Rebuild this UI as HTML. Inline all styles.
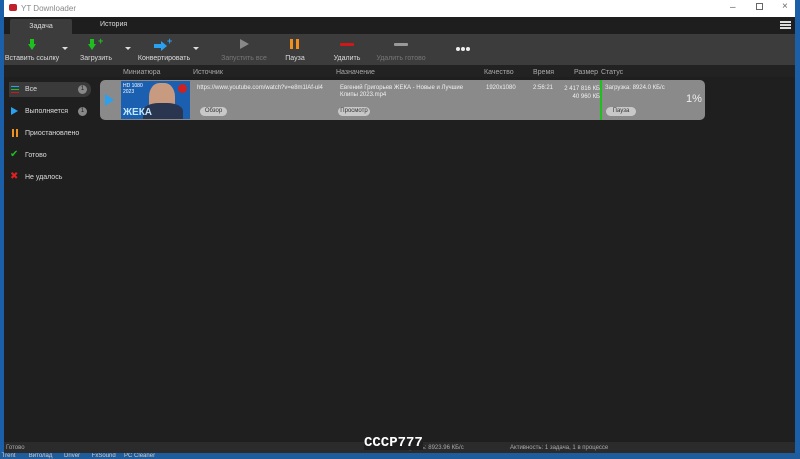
<!DOCTYPE html>
<html><head><meta charset="utf-8"><style>
*{box-sizing:border-box;margin:0;padding:0}
body{width:800px;height:459px;overflow:hidden;background:#1a5fa8;font-family:"Liberation Sans",sans-serif;font-size:7px;color:#ddd;position:relative}
.abs{position:absolute}
.win{left:4px;top:0;width:791px;height:453px;background:#1f1f1f}
.title{left:0;top:0;width:791px;height:17px;background:#fff;color:#888;font-size:8px}
.tabs{left:0;top:17px;width:791px;height:17px;background:#1e1e1e}
.tb{top:34px;left:0;width:791px;height:31px;background:#3c3c3c}
.tbi{position:absolute;top:0;height:31px;text-align:center;color:#ddd;font-size:7px}
.tbi span{position:absolute;bottom:3px;left:0;right:0;white-space:nowrap}
.hdr{top:65px;left:0;width:791px;height:12px;background:#222;color:#aaa}
.hdr div{position:absolute;top:4px}
.si{position:absolute;left:5px;height:15px;width:82px;line-height:15px;padding-left:16px}
.badge{position:absolute;right:4px;top:3px;width:9px;height:9px;border-radius:50%;background:#888;color:#222;font-size:6px;line-height:9px;text-align:center}
.card{left:96px;top:80px;width:605px;height:40px;background:#8a8a8a;border-radius:5px;color:#f0f0f0}
.btn{position:absolute;background:#c8c8c8;color:#333;border-radius:5px;height:9px;font-size:6px;line-height:9px;text-align:center}
.status{left:0;top:442px;width:791px;height:11px;background:#2b2b2b;color:#aaa;font-size:6px}
</style></head><body>
<div class="abs" style="left:0;top:453px;width:800px;height:6px;background:#1f5c9c;color:#ccc;font-size:6px;line-height:6px">&nbsp;Trent &nbsp;&nbsp;&nbsp;&nbsp;&nbsp;&nbsp; Витолад &nbsp;&nbsp;&nbsp;&nbsp;&nbsp; Driver &nbsp;&nbsp;&nbsp;&nbsp;&nbsp; FxSound &nbsp;&nbsp;&nbsp; PC Cleaner</div>
<div class="abs win">
 <div class="abs title"><div class="abs" style="left:5px;top:4px;width:8px;height:7px;background:#c0202a;border-radius:2px"></div><div class="abs" style="left:17px;top:4px">YT Downloader</div>
 <div class="abs" style="left:726px;top:2px;font-size:10px;color:#666">–</div><div class="abs" style="left:752px;top:3px;width:7px;height:7px;border:1px solid #666"></div><div class="abs" style="left:778px;top:1px;font-size:10px;color:#666">×</div></div>
 <div class="abs tabs"><div class="abs" style="left:6px;top:2px;width:62px;height:15px;background:#3c3c3c;text-align:center;line-height:15px;border-radius:2px 2px 0 0">Задача</div><div class="abs" style="left:96px;top:4px">История</div>
 <div class="abs" style="left:776px;top:4px;width:11px;height:2px;background:#ddd;box-shadow:0 3px #ddd,0 6px #ddd"></div></div>
 <div class="abs tb">
  <div class="tbi" style="left:0;width:56px"><div class="abs" style="left:26px;top:5px;width:4px;height:5px;background:#1ec01e"></div><div class="abs" style="left:24px;top:10px;border-left:4px solid transparent;border-right:4px solid transparent;border-top:6px solid #1ec01e"></div><span>Вставить ссылку</span></div>
  <div class="abs" style="left:58px;top:13px;border:3px solid transparent;border-top:3px solid #ddd"></div>
  <div class="tbi" style="left:72px;width:40px"><div class="abs" style="left:14px;top:5px;width:4px;height:5px;background:#1ec01e"></div><div class="abs" style="left:12px;top:10px;border-left:4px solid transparent;border-right:4px solid transparent;border-top:6px solid #1ec01e"></div><div class="abs" style="left:22px;top:2px;color:#1ec01e;font-size:9px;font-weight:bold">+</div><span>Загрузить</span></div>
  <div class="abs" style="left:121px;top:13px;border:3px solid transparent;border-top:3px solid #ddd"></div>
  <div class="tbi" style="left:130px;width:60px"><div class="abs" style="left:20px;top:10px;width:7px;height:4px;background:#2aa0f0"></div><div class="abs" style="left:27px;top:7px;border-top:5px solid transparent;border-bottom:5px solid transparent;border-left:6px solid #2aa0f0"></div><div class="abs" style="left:33px;top:2px;color:#2aa0f0;font-size:9px;font-weight:bold">+</div><span>Конвертировать</span></div>
  <div class="abs" style="left:189px;top:13px;border:3px solid transparent;border-top:3px solid #ddd"></div>
  <div class="tbi" style="left:215px;width:50px;color:#777"><div class="abs" style="left:21px;top:5px;border-top:5px solid transparent;border-bottom:5px solid transparent;border-left:9px solid #888"></div><span>Запустить все</span></div>
  <div class="tbi" style="left:276px;width:30px"><div class="abs" style="left:10px;top:5px;width:3px;height:10px;background:#f0901e"></div><div class="abs" style="left:16px;top:5px;width:3px;height:10px;background:#f0901e"></div><span>Пауза</span></div>
  <div class="tbi" style="left:328px;width:30px"><div class="abs" style="left:8px;top:9px;width:14px;height:3px;background:#d01818;border-radius:1px"></div><span>Удалить</span></div>
  <div class="tbi" style="left:372px;width:50px;color:#777"><div class="abs" style="left:18px;top:9px;width:14px;height:3px;background:#999;border-radius:1px"></div><span>Удалить готово</span></div>
  <div class="abs" style="left:452px;top:13px;width:4px;height:4px;border-radius:50%;background:#eee;box-shadow:5px 0 #eee,10px 0 #eee"></div>
 </div>
 <div class="abs hdr"><div style="left:119px">Миниатюра</div><div style="left:189px">Источник</div><div style="left:332px">Назначение</div><div style="left:480px">Качество</div><div style="left:529px">Время</div><div style="left:570px">Размер</div><div style="left:597px">Статус</div></div>
 <div class="si" style="top:82px;background:#3a3a3a;border-radius:0 7px 7px 0">Все<span class="badge">1</span></div>
 <div class="abs" style="left:7px;top:86px;width:8px;height:1px;background:#2aa0f0;box-shadow:0 3px #1ec01e,0 6px #d01818"></div>
 <div class="si" style="top:104px">Выполняется<span class="badge">1</span></div>
 <div class="abs" style="left:7px;top:107px;border-top:4px solid transparent;border-bottom:4px solid transparent;border-left:7px solid #2aa0f0"></div>
 <div class="si" style="top:126px">Приостановлено</div>
 <div class="abs" style="left:8px;top:129px;width:2px;height:8px;background:#f0901e;box-shadow:4px 0 #f0901e"></div>
 <div class="si" style="top:148px">Готово</div>
 <div class="abs" style="left:6px;top:149px;color:#1ec01e;font-size:10px">✔</div>
 <div class="si" style="top:170px">Не удалось</div>
 <div class="abs" style="left:6px;top:171px;color:#e02020;font-size:10px">✖</div>
 <div class="abs card">
  <div class="abs" style="left:5px;top:14px;border-top:6px solid transparent;border-bottom:6px solid transparent;border-left:9px solid #2aa0f0"></div>
  <div class="abs" style="left:21px;top:1px;width:69px;height:38px;background:#1a5fb0;overflow:hidden">
   <div class="abs" style="left:28px;top:2px;width:26px;height:34px;background:#c89a80;border-radius:40%"></div>
   <div class="abs" style="left:22px;top:22px;width:40px;height:20px;background:#2a3550;border-radius:40% 40% 0 0"></div>
   <div class="abs" style="left:2px;top:2px;color:#fff;font-size:5px">HD 1080<br>2023</div>
   <div class="abs" style="left:57px;top:3px;width:9px;height:9px;background:#d02020;border-radius:50%"></div>
   <div class="abs" style="left:2px;top:26px;color:#bfe8ff;font-size:10px;font-weight:bold">ЖЕКА</div>
  </div>
  <div class="abs" style="left:97px;top:5px;font-size:6px">https://www.youtube.com/watch?v=e8m1lAf-ul4</div>
  <div class="btn" style="left:100px;top:27px;width:27px">Обзор</div>
  <div class="abs" style="left:240px;top:5px;font-size:6px;width:130px;line-height:7px">Евгений Григорьев ЖЕКА - Новые и Лучшие Клипы 2023.mp4</div>
  <div class="btn" style="left:238px;top:27px;width:32px">Просмотр</div>
  <div class="abs" style="left:386px;top:5px;font-size:6px">1920x1080</div>
  <div class="abs" style="left:433px;top:5px;font-size:6px">2:56:21</div>
  <div class="abs" style="left:462px;top:5px;font-size:6px;text-align:right;width:38px;line-height:8px">2 417 816 КБ<br>40 960 КБ</div>
  <div class="abs" style="left:500px;top:0;width:2px;height:40px;background:#1ec01e"></div>
  <div class="abs" style="left:505px;top:5px;font-size:6px">Загрузка: 8924.0 КБ/с</div>
  <div class="abs" style="left:586px;top:13px;font-size:11px;color:#eee">1%</div>
  <div class="btn" style="left:506px;top:27px;width:30px">Пауза</div>
 </div>
 <div class="abs status"><div class="abs" style="left:2px;top:3px">Готово</div><div class="abs" style="left:395px;top:3px">Скорость: 8923.96 КБ/с</div><div class="abs" style="left:506px;top:3px">Активность: 1 задача, 1 в процессе</div></div>
 <div class="abs" style="left:360px;top:436px;color:#fff;font-family:'Liberation Mono',monospace;font-size:14px;font-weight:bold;background:#1f1f1f;line-height:14px">СССР777</div>
</div>
</body></html>
